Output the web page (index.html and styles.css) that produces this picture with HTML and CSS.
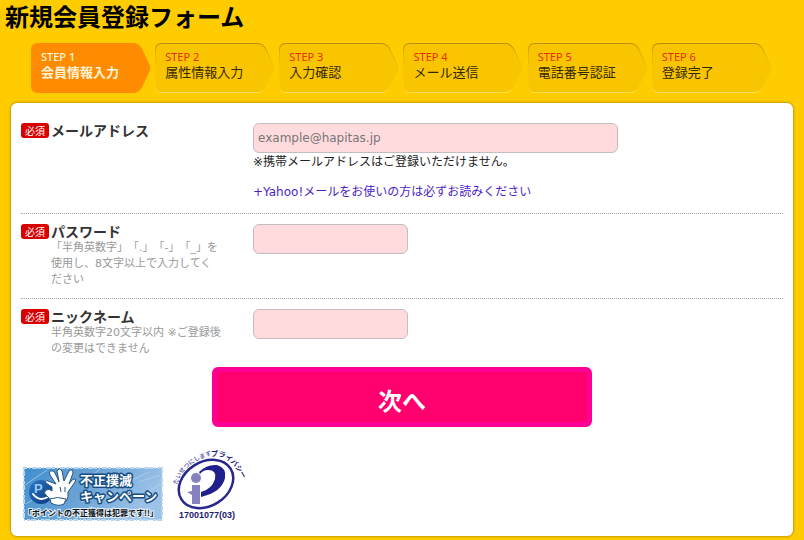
FILE: index.html
```html
<!DOCTYPE html>
<html lang="ja">
<head>
<meta charset="utf-8">
<meta name="viewport" content="width=device-width, initial-scale=1">
<title>新規会員登録フォーム</title>
<link rel="stylesheet" href="styles.css">
</head>
<body>
<svg class="defs" aria-hidden="true">
  <defs>
    <linearGradient id="rim" x1="0" y1="0" x2="0" y2="1">
      <stop offset="0" stop-color="#b88f00"/>
      <stop offset="0.2" stop-color="#e2b400"/>
      <stop offset="0.5" stop-color="#f7c500"/>
      <stop offset="0.9" stop-color="#fbcb08"/>
      <stop offset="1" stop-color="#ffe052"/>
    </linearGradient>
    <symbol id="arrow" viewBox="0 0 120 50" preserveAspectRatio="none">
      <path d="M7 .5H102Q107 .5 110 5L118 22Q119.500 25 118 28L110 45Q107 49.500 102 49.500H7Q.5 49.500 .5 43V7Q.5 .5 7 .5Z"/>
    </symbol>
  </defs>
</svg>
<h1 class="title">新規会員登録フォーム</h1>
<ol class="steps">
  <li class="step current"><svg class="shape" aria-hidden="true"><use href="#arrow"/></svg><span class="num">STEP 1</span><span class="name">会員情報入力</span></li>
  <li class="step"><svg class="shape" aria-hidden="true"><use href="#arrow"/></svg><span class="num">STEP 2</span><span class="name">属性情報入力</span></li>
  <li class="step"><svg class="shape" aria-hidden="true"><use href="#arrow"/></svg><span class="num">STEP 3</span><span class="name">入力確認</span></li>
  <li class="step"><svg class="shape" aria-hidden="true"><use href="#arrow"/></svg><span class="num">STEP 4</span><span class="name">メール送信</span></li>
  <li class="step"><svg class="shape" aria-hidden="true"><use href="#arrow"/></svg><span class="num">STEP 5</span><span class="name">電話番号認証</span></li>
  <li class="step"><svg class="shape" aria-hidden="true"><use href="#arrow"/></svg><span class="num">STEP 6</span><span class="name">登録完了</span></li>
</ol>
<main class="panel">
  <form>
    <div class="row">
      <span class="badge">必須</span>
      <div class="caption"><label for="email">メールアドレス</label></div>
      <div class="field">
        <input class="input wide" id="email" type="email" placeholder="example@hapitas.jp">
        <p class="note">※携帯メールアドレスはご登録いただけません。</p>
        <p class="more"><a href="#">+Yahoo!メールをお使いの方は必ずお読みください</a></p>
      </div>
    </div>
    <div class="row">
      <span class="badge">必須</span>
      <div class="caption"><label for="password">パスワード</label>
        <p class="hint">「半角英数字」「.」「-」「_」を使用し、8文字以上で入力してください</p></div>
      <div class="field"><input class="input" id="password" type="password"></div>
    </div>
    <div class="row">
      <span class="badge">必須</span>
      <div class="caption"><label for="nickname">ニックネーム</label>
        <p class="hint">半角英数字20文字以内 ※ご登録後の変更はできません</p></div>
      <div class="field"><input class="input" id="nickname" type="text"></div>
    </div>
    <button class="next" type="submit">次へ</button>
  </form>
  <div class="marks">
    <a href="#" aria-label="不正撲滅キャンペーン">
      <svg class="campaign" viewBox="0 0 140 54" width="140" height="54">
        <defs>
          <linearGradient id="sea" x1="0" x2="1" y1="0" y2=".3">
            <stop offset="0" stop-color="#3f8fce"/><stop offset=".5" stop-color="#69a3d6"/><stop offset="1" stop-color="#9dc2e8"/>
          </linearGradient>
          <linearGradient id="ball" x1="0" x2="1" y1="0" y2="1">
            <stop offset="0" stop-color="#2e79c4"/><stop offset="1" stop-color="#07377e"/>
          </linearGradient>
        </defs>
        <rect x="1" y="1" width="138" height="52" fill="url(#sea)"/>
        <rect x="1" y="1" width="138" height="52" fill="none" stroke="#b9d5ee" stroke-width="2" stroke-dasharray="3 2 1 2 5 1"/>
        <path d="M2 18 24 3M3 37 16 29M64 13 77 2M95 20 126 5M112 33 138 17M116 15 137 8M58 35 76 28" stroke="#b8d4ef" stroke-width="1" opacity=".7"/>
        <circle cx="18" cy="25" r="12" fill="url(#ball)"/>
        <text class="point" x="11" y="26">P</text>
        <path d="M10 27Q16 35 25 30" fill="none" stroke="#fff" stroke-width="2" stroke-linecap="round"/>
        <g fill="#fff" stroke="#28557f" stroke-width="1" stroke-linejoin="round">
          <path d="M29 20 23 16Q21 13 25 14L33 17 27 8Q25 3 30 4Q32 5 36 15L34 4Q36 0 39 4L41 14 46 4Q50 1 50 6L46 17 49 13Q54 10 52 15L45 25Q46 35 38 37Q28 39 26 31L23 28Q20 26 23 23Q26 21 29 24Z"/>
          <path d="M27 32Q34 29 43 32L41 37Q35 40 28 36Z"/>
          <path d="M37 20 38 25M42 20V25" fill="none"/>
        </g>
        <g class="slogan">
          <text x="57" y="18">不正撲滅</text>
          <text x="57" y="34">キャンペーン</text>
        </g>
        <text class="quote" x="5" y="49">｢ポイントの不正獲得は犯罪です!!｣</text>
      </svg>
    </a>
    <a href="#" aria-label="プライバシーマーク 17001077(03)">
      <svg class="privacy" viewBox="0 0 74 74" width="74" height="74">
        <defs>
          <path id="arc-left" d="M8 38Q14 16 43 8"/>
          <path id="arc-right" d="M42 9Q60 6 74 33"/>
        </defs>
        <ellipse cx="37" cy="37" rx="29" ry="22" fill="none" stroke="#27278c" stroke-width="2.500" transform="rotate(-32 37 37)"/>
        <path d="M30 25Q38 17 48 18Q58 21 56 31Q53 45 32 50V45Q43 42 46 32Q48 23 39 23Q34 23 31 27Z" fill="#20208c"/>
        <circle cx="27" cy="31" r="5" fill="#8581c0"/>
        <path d="M23 38H31V57H23V48L18 45 23 44Z" fill="#8581c0"/>
        <text class="arc-soft"><textPath href="#arc-left">たいせつにします</textPath></text>
        <text class="arc-strong"><textPath href="#arc-right">プライバシー</textPath></text>
        <text class="number" x="10" y="71">17001077(03)</text>
      </svg>
    </a>
  </div>
</main>
</body>
</html>
```
FILE: styles.css
```css
* { box-sizing: border-box; }

body {
  margin: 0;
  padding: 0 11px 4px;
  background: #ffcc00;
  color: #222;
  font: 12px/16px "DejaVu Sans", "Noto Sans CJK JP", sans-serif;
  text-spacing-trim: space-all;
}

p, h1, ol { margin: 0; padding: 0; }

.defs { display: block; width: 0; height: 0; }

.title {
  margin-left: -6px;
  color: #000;
  font: bold 24px/32px "Noto Sans CJK JP", sans-serif;
}

.steps {
  display: grid;
  grid-template-columns: repeat(6, 1fr);
  gap: 4px;
  margin: 11px 21px 10px 20px;
  list-style: none;
}

.step {
  position: relative;
  height: 50px;
  padding: 6px 10px;
  color: #332900;
}

.shape {
  position: absolute;
  inset: 0;
  width: 100%;
  height: 100%;
  fill: #f9c400;
  stroke: url(#rim);
}

.num, .name { position: relative; display: block; white-space: nowrap; }
.num { color: #e62e00; font: 11px/16px "Noto Sans", sans-serif; }
.name { font: 13px/14px "Noto Sans CJK JP", sans-serif; }

.current, .current .num { color: #fff3dc; }
.current .name { font-weight: bold; }
.current .num { font-weight: 500; }
.current .shape { fill: #ff8c00; stroke: #ff8c00; }

.panel {
  padding: 10px 10px 15px;
  border-radius: 6px;
  background: #fff;
  box-shadow: 0 0 3px #8a6d00;
}

.row {
  display: flex;
  padding: 10px 0;
  border-bottom: 1px dotted #aaa;
}
.row:first-child { padding-bottom: 13px; }
.row:nth-child(3) { border-bottom: 0; }

.badge {
  width: 28px;
  height: 15px;
  margin-right: 2px;
  border-radius: 3px;
  background: #d90000;
  color: #fff;
  font: 10px/15px "Noto Sans CJK JP", sans-serif;
  text-align: center;
}

.caption { width: 170px; margin-right: 32px; }
.caption label {
  display: block;
  color: #333;
  font: bold 14px/14px "Noto Sans CJK JP", sans-serif;
}
.hint { margin-top: 2px; color: #999; font-size: 11px; line-height: 16px; }

.field { flex: 1; min-width: 0; }
.input {
  display: block;
  width: 155px;
  height: 30px;
  padding: 0 4px;
  border: 1px solid #c5bcbf;
  border-radius: 6px;
  background: #ffdbde;
  color: #333;
  font: inherit;
}
.input::placeholder { color: #777; opacity: 1; }
.wide { width: 365px; max-width: 100%; }
.note { margin-top: 1px; }
.more { margin-top: 14px; }
.more a { color: #4b1fc4; text-decoration: none; }

.next {
  display: block;
  width: 380px;
  max-width: 100%;
  height: 60px;
  margin: 0 auto;
  padding: 6px 0 0;
  border: 5px solid #ff0096;
  border-radius: 6px;
  background: #ff006e;
  color: #fff;
  font: bold 24px/32px "Noto Sans CJK JP", sans-serif;
}

.marks {
  display: flex;
  align-items: flex-end;
  gap: 6px;
  margin: 20px 0 0 2px;
}
.marks svg { display: block; overflow: visible; }

.point { fill: #9bcbf5; font: bold 13px "Liberation Sans", sans-serif; }
.slogan text {
  fill: #fff;
  stroke: #174c80;
  stroke-width: 3px;
  stroke-linejoin: round;
  paint-order: stroke;
  font: bold 13px "Noto Sans CJK JP", sans-serif;
}
.quote {
  fill: #111;
  stroke: #e3effa;
  stroke-width: 2px;
  paint-order: stroke;
  font: bold 8px "Noto Sans CJK JP", sans-serif;
}
.arc-soft { fill: #6c68b4; font: bold 6px "Noto Sans CJK JP", sans-serif; }
.arc-strong { fill: #20207c; font: bold 7px "Noto Sans CJK JP", sans-serif; }
.number { fill: #20206c; font: bold 9px "Liberation Sans", sans-serif; }
```
